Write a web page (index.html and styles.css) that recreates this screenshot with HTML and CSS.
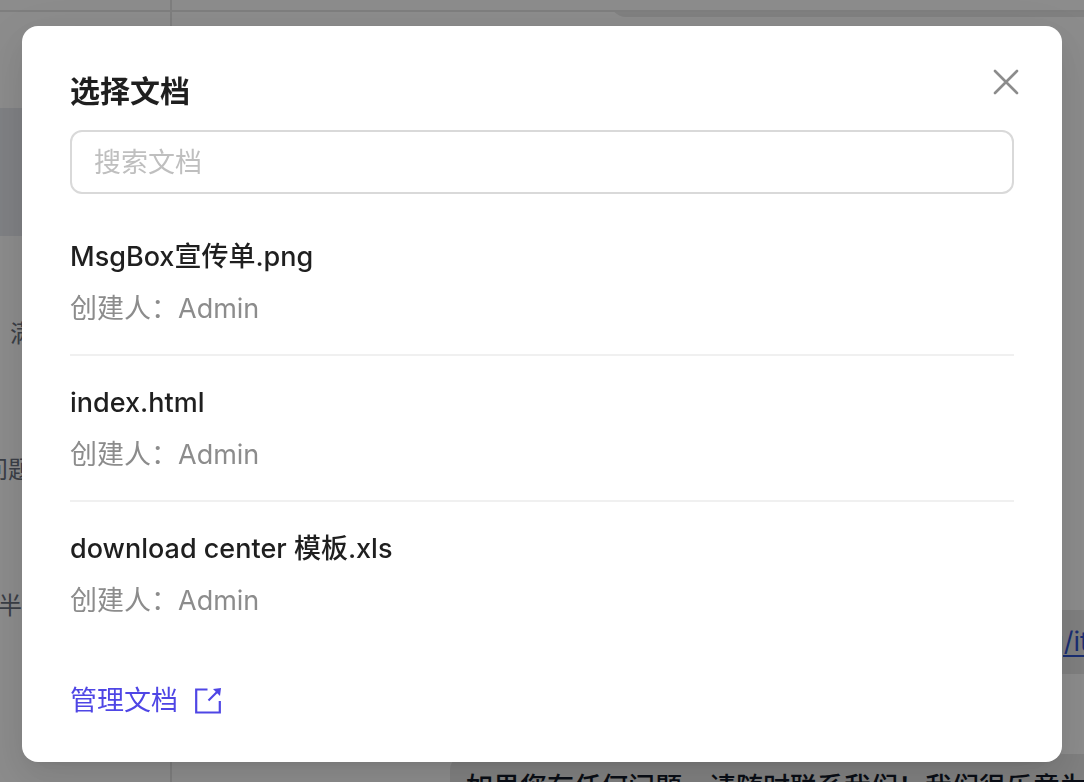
FILE: index.html
```html
<!DOCTYPE html>
<html lang="zh-CN">
<head>
    <meta charset="UTF-8">
    <meta name="viewport" content="width=device-width, initial-scale=1.0">
    <title>选择文档</title>
    <link rel="stylesheet" href="styles.css">
</head>
<body>
    <div class="app">
        <header class="topbar">
            <div class="topbar-side"></div>
        </header>
        <div class="content">
            <aside class="sidebar">
                <div class="chat-item active"></div>
                <div class="chat-item short">满</div>
                <div class="chat-item">问题</div>
                <div class="chat-item medium">半</div>
            </aside>
            <main class="messages">
                <div class="bubble bubble-first"></div>
                <div class="bubble bubble-link"><a href="#">g/item</a></div>
                <div class="bubble bubble-text">如果您有任何问题，请随时联系我们！我们很乐意为您</div>
            </main>
        </div>
    </div>

    <div class="overlay">
        <div class="modal" role="dialog" aria-labelledby="modal-title">
            <button class="close" type="button" aria-label="关闭">
                <svg width="28" height="28" viewBox="0 0 28 28" fill="none" stroke="currentColor" stroke-width="2.6" stroke-linecap="round">
                    <path d="M3 3L25 25M25 3L3 25"/>
                </svg>
            </button>
            <h1 class="title" id="modal-title">选择文档</h1>
            <input class="search" type="text" placeholder="搜索文档" aria-label="搜索文档">

            <ul class="doc-list">
                <li class="doc">
                    <div class="doc-name">MsgBox宣传单.png</div>
                    <div class="doc-creator">创建人：Admin</div>
                </li>
                <li class="doc">
                    <div class="doc-name">index.html</div>
                    <div class="doc-creator">创建人：Admin</div>
                </li>
                <li class="doc">
                    <div class="doc-name">download center 模板.xls</div>
                    <div class="doc-creator">创建人：Admin</div>
                </li>
            </ul>

            <a class="manage" href="#">
                管理文档
                <svg width="28" height="28" viewBox="0 0 28 28" fill="none" stroke="currentColor" stroke-width="2.2">
                    <path d="M13.5 2.500H2.2V25.500H25.8V14"/>
                    <path d="M14.5 13.500L23 5"/>
                    <path d="M19 2L27 1L26 9Z" fill="currentColor" stroke="none"/>
                </svg>
            </a>
        </div>
    </div>
</body>
</html>
```

FILE: styles.css
```css
* {
    box-sizing: border-box;
}

body {
    margin: 0;
    background-color: #fff;
    color: #1f1f1f;
    font-family: Inter, "Noto Sans CJK SC", sans-serif;
    font-size: 27px;
}

/* page behind the dialog */
.app {
    display: flex;
    flex-direction: column;
    height: 100vh;
    overflow: hidden;
}

.topbar {
    flex: none;
    display: flex;
    height: 12px;
    border-bottom: 2px solid #e5e5e5;
}

.topbar-side {
    width: 172px;
    border-right: 2px solid #e5e5e5;
}

.content {
    flex: 1;
    display: flex;
    min-height: 0;
}

.sidebar {
    flex: none;
    display: flex;
    flex-direction: column;
    gap: 8px;
    width: 188px;
    margin-left: -16px;
    padding-top: 96px;
    border-right: 2px solid #e5e5e5;
}

.chat-item {
    height: 128px;
    padding-top: 72px;
    color: #6b7280;
    font-size: 24px;
    line-height: 36px;
}

.chat-item.active {
    background-color: #e8eaf0;
}

.chat-item.medium {
    padding-left: 14px;
}

.chat-item.short {
    padding-left: 26px;
}

.messages {
    flex: 1;
    display: flex;
    flex-direction: column;
    align-items: flex-end;
    min-width: 0;
    overflow: hidden;
}

.bubble {
    flex: none;
    background-color: #e9e9e9;
    border-radius: 16px 0 0 16px;
    line-height: 40px;
    white-space: nowrap;
    overflow: hidden;
}

.bubble-first {
    width: 474px;
    height: 64px;
    margin-top: -59px;
}

.bubble-link {
    width: 634px;
    height: 64px;
    margin-top: 593px;
    padding: 12px 0;
    text-align: right;
}

.bubble-link a {
    display: inline-block;
    margin-right: -44px;
    color: #2f54d0;
    text-underline-offset: 4px;
}

.bubble-text {
    width: 634px;
    margin-top: 80px;
    padding: 14px 16px;
    color: #111827;
    font-weight: 500;
}

/* dialog */
.overlay {
    position: fixed;
    inset: 0;
    padding: 26px 22px;
    background-color: rgba(0, 0, 0, 0.45);
    overflow: hidden;
}

.modal {
    position: relative;
    padding: 48px 48px 40px;
    background-color: #fff;
    border-radius: 16px;
    box-shadow: 0 12px 32px rgba(0, 0, 0, 0.08), 0 6px 12px -8px rgba(0, 0, 0, 0.12), 0 18px 56px 16px rgba(0, 0, 0, 0.05);
}

.close {
    position: absolute;
    top: 34px;
    right: 34px;
    display: flex;
    align-items: center;
    justify-content: center;
    width: 44px;
    height: 44px;
    padding: 0;
    border: none;
    background: none;
    color: #8c8c8c;
    cursor: pointer;
}

.title {
    margin: 0 0 22px;
    font-size: 30px;
    font-weight: 600;
    line-height: 34px;
}

.search {
    display: block;
    width: 100%;
    height: 64px;
    padding: 0 22px;
    border: 2px solid #d9d9d9;
    border-radius: 12px;
    color: inherit;
    font-family: inherit;
    font-size: 27px;
}

.search::placeholder {
    color: #bfbfbf;
}

.doc-list {
    margin: 16px 0 32px;
    padding: 0;
    list-style: none;
}

.doc {
    display: flex;
    flex-direction: column;
    gap: 8px;
    padding: 25px 0 23px;
    border-bottom: 2px solid #f0f0f0;
    line-height: 44px;
}

.doc:last-child {
    padding-bottom: 24px;
    border-bottom: none;
}

.doc-name {
    font-weight: 500;
}

.doc-creator {
    color: #8c8c8c;
}

.manage {
    display: flex;
    align-items: center;
    gap: 16px;
    margin-bottom: -1px;
    color: #4f46e5;
    line-height: 44px;
    text-decoration: none;
}
```
